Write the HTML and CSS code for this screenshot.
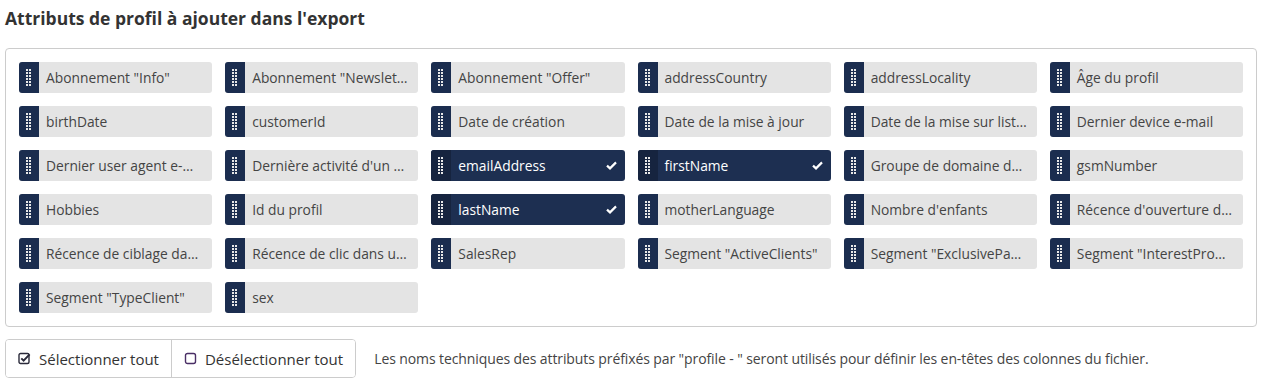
FILE: index.html
```html
<!DOCTYPE html>
<html lang="fr">
<head>
  <meta charset="UTF-8">
  <title>Export - attributs de profil</title>
  <link rel="stylesheet" href="styles.css">
</head>
<body>
  <h2 class="title">Attributs de profil à ajouter dans l'export</h2>

  <div class="panel" id="attributes"></div>

  <div class="footer">
    <div class="btn-group">
      <button class="btn" onclick="setAll(true)">
        <svg width="13" height="13" viewBox="0 0 13 13"><rect x="1" y="1.5" width="10" height="10" rx="1.5" fill="none" stroke="#2a2a3a" stroke-width="1.4"/><path d="M3.3 6.4 L5.6 8.6 L11.6 2.4" fill="none" stroke="#2a2a3a" stroke-width="2"/></svg>
        Sélectionner tout
      </button>
      <button class="btn" onclick="setAll(false)">
        <svg width="13" height="13" viewBox="0 0 13 13"><rect x="1.5" y="1.5" width="10" height="10" rx="2" fill="none" stroke="#4a2f66" stroke-width="1.4"/></svg>
        Désélectionner tout
      </button>
    </div>
    <p class="hint">Les noms techniques des attributs préfixés par "profile - " seront utilisés pour définir les en-têtes des colonnes du fichier.</p>
  </div>

  <script>
    const attributes = [
      'Abonnement "Info"', 'Abonnement "Newsletter"', 'Abonnement "Offer"', 'addressCountry', 'addressLocality', 'Âge du profil',
      'birthDate', 'customerId', 'Date de création', 'Date de la mise à jour', 'Date de la mise sur liste rouge', 'Dernier device e-mail',
      'Dernier user agent e-mail', "Dernière activité d'un canal", 'emailAddress', 'firstName', 'Groupe de domaine de l\'e-mail', 'gsmNumber',
      'Hobbies', 'Id du profil', 'lastName', 'motherLanguage', "Nombre d'enfants", "Récence d'ouverture d'un e-mail",
      'Récence de ciblage dans une campagne', 'Récence de clic dans un e-mail', 'SalesRep', 'Segment "ActiveClients"', 'Segment "ExclusivePartners"', 'Segment "InterestProducts"',
      'Segment "TypeClient"', 'sex'
    ];
    const selected = ['emailAddress', 'firstName', 'lastName'];
    const panel = document.getElementById('attributes');

    // petite poignée de glisser-déposer
    const grip = '<svg width="6" height="17" viewBox="0 0 6 17">' +
      [0, 3, 6, 9, 12, 15].map(y => `<rect x="0" y="${y}" width="2" height="2"/><rect x="3" y="${y}" width="2" height="2"/>`).join('') +
      '</svg>';
    const check = '<svg width="11" height="9" viewBox="0 0 11 9"><path d="M1 4.6 L4 7.4 L10 1.4" fill="none" stroke="#fff" stroke-width="2.2"/></svg>';

    attributes.forEach(name => {
      const item = document.createElement('div');
      item.className = 'attr';
      if (selected.includes(name)) item.classList.add('selected');
      item.innerHTML = `<span class="handle">${grip}</span><span class="label"></span><span class="check">${check}</span>`;
      item.querySelector('.label').textContent = name;
      item.title = name;
      item.onclick = () => item.classList.toggle('selected');
      panel.appendChild(item);
    });

    function setAll(on) {
      document.querySelectorAll('.attr').forEach(el => el.classList.toggle('selected', on));
    }
  </script>
</body>
</html>
```

FILE: styles.css
```css
body {
  font-family: 'Open Sans', sans-serif;
  color: #333;
  margin: 0;
  padding: 0 7px 0 5px;
  background: #fff;
}

.title {
  font-size: 17.5px;
  font-weight: 700;
  margin: 0;
  padding: 6px 0 0;
  height: 48px;
  box-sizing: border-box;
  color: #333;
}

.panel {
  border: 1px solid #ccc;
  border-radius: 4px;
  padding: 13px;
  display: grid;
  grid-template-columns: repeat(6, 1fr);
  gap: 13px;
}

.attr {
  display: flex;
  align-items: center;
  height: 31px;
  background: #e4e4e4;
  border-radius: 3px;
  overflow: hidden;
  cursor: pointer;
  color: #444;
  font-size: 13.8px;
}

.handle {
  flex: 0 0 20px;
  align-self: stretch;
  background: #1b2d4f;
  display: flex;
  align-items: center;
  justify-content: center;
  fill: #e8e8e8;
}

.label {
  flex: 1;
  min-width: 0;
  padding: 0 10px 0 7px;
  white-space: nowrap;
  overflow: hidden;
  text-overflow: ellipsis;
}

.check {
  display: none;
  padding: 0 8px 0 0;
}

.attr.selected {
  background: #1d2f51;
  color: #fff;
}

.attr.selected .handle {
  background: #16243f;
}

.attr.selected .check {
  display: flex;
}

.footer {
  display: flex;
  align-items: center;
  margin-top: 12px;
}

.btn-group {
  display: flex;
  border: 1px solid #ccc;
  border-radius: 4px;
  overflow: hidden;
}

.btn {
  font-family: 'Open Sans', sans-serif;
  font-size: 15px;
  color: #333;
  background: #fff;
  border: none;
  height: 37px;
  padding: 0 12px;
  display: flex;
  align-items: center;
  gap: 8px;
  cursor: pointer;
}

.btn + .btn {
  border-left: 1px solid #ccc;
}

.btn:hover {
  background: #f2f2f2;
}

.hint {
  margin: 0 0 0 18px;
  font-size: 14px;
  letter-spacing: -0.1px;
  color: #444;
}
```
